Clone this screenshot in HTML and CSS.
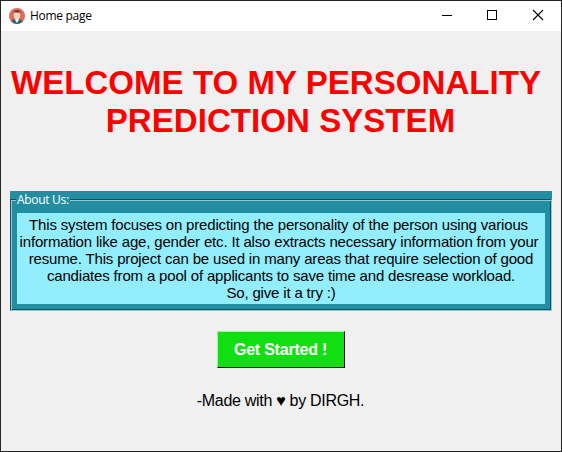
FILE: index.html
```html
<!DOCTYPE html>
<html lang="en">
<head>
<meta charset="utf-8">
<title>Home page</title>
<link rel="stylesheet" href="styles.css">
</head>
<body>
<div class="window">
  <header class="titlebar">
    <svg class="app-icon" viewBox="0 0 16 16" width="16" height="16">
      <circle cx="8" cy="8" r="8" fill="#e36b5b"/>
      <path d="M2.2 13.5Q3.5 11.3 6.3 11h3.4q2.8.3 4.1 2.5A8 8 0 0 1 2.2 13.500Z" fill="#28647b"/>
      <path d="M6.3 10h3.400v2.200L8 15l-1.700-2.800Z" fill="#fff"/>
      <ellipse cx="8" cy="7" rx="3.3" ry="4.2" fill="#f6d5bd"/>
      <path d="M4.5 5.500Q3.800 2.200 8 2q4.200.2 3.500 3.500l-.8-.9Q8 5 5.500 4.300Z" fill="#7b3c2e"/>
    </svg>
    <span class="title">Home page</span>
    <svg class="controls" viewBox="0 0 138 30" width="138" height="30" shape-rendering="crispEdges">
      <path d="M19 14.500h10" stroke="#000" fill="none"/>
      <path d="M64.500 9.500h9v9h-9z" stroke="#000" fill="none"/>
      <path d="M110 9l10 10M120 9l-10 10" stroke="#000" fill="none" stroke-width="1.1" shape-rendering="auto"/>
    </svg>
  </header>
  <main class="content">
    <h1 class="heading"><span class="h1a">WELCOME TO MY PERSONALITY</span><span class="h1b">PREDICTION SYSTEM</span></h1>
    <section class="about">
      <div class="groove">
        <h2 class="legend">About Us:</h2>
        <p class="text">
          <span class="l1">This system focuses on predicting the personality of the person using various</span>
          <span class="l2">information like age, gender etc. It also extracts necessary information from your</span>
          <span class="l3">resume. This project can be used in many areas that require selection of good</span>
          <span class="l4">candiates from a pool of applicants to save time and desrease workload.</span>
          <span class="l5">So, give it a try :)</span>
        </p>
      </div>
    </section>
    <button class="start" type="button">Get Started !</button>
    <footer class="credit">-Made with <span class="heart">♥</span> by DIRGH.</footer>
  </main>
</div>
</body>
</html>
```
FILE: styles.css
```css
* { box-sizing: border-box; }
body { margin: 0; font-family: "Liberation Sans", Arial, sans-serif; color: #000; }
.window { width: 562px; height: 452px; border: 1px solid #252525; background: #f0f0f0; overflow: hidden; }
.titlebar { height: 30px; background: #fff; display: flex; align-items: center; padding-left: 8px; }
.app-icon { flex: none; }
.title { margin-left: 5px; font: 12px/16px "Open Sans", "Segoe UI", sans-serif; letter-spacing: -0.3px; }
.controls { margin-left: auto; }
.content { display: flex; flex-direction: column; align-items: center; padding-top: 33px; }
.heading { margin: 0; display: flex; flex-direction: column; align-items: center; font-size: 33px; line-height: 38px; font-weight: bold; letter-spacing: 0.06px; color: #f00; white-space: nowrap; }
.h1a { margin-right: 10px; }
.h1b { margin-right: 1px; }
.about { width: 542px; height: 120px; margin-top: 51px; padding-top: 8px; background: #238ea1; }
.groove { height: 112px; border: 1px solid #124f60; border-right-color: #91c7d0; border-bottom-color: #91c7d0; padding: 0 5px 4px; box-shadow: inset 1px 1px #91c7d0, inset -1px -1px #124f60; }
.legend { margin: -8px 0 0; width: 54px; height: 16px; padding-left: 1px; background: #238ea1; color: #fff; font: 12px/16px "Open Sans", "Segoe UI", sans-serif; letter-spacing: -0.3px; white-space: nowrap; }
.text { margin: 5px 0 0 1px; width: 528px; height: 91px; padding-top: 3px; background: #92edfc; display: flex; flex-direction: column; align-items: center; font-size: 15px; line-height: 17px; letter-spacing: -0.17px; white-space: nowrap; }
.l1 { margin-right: 5px; }
.l2 { margin-right: 4px; }
.start { margin-top: 20px; width: 128px; height: 37px; padding: 0 1px 0 0; border: 1px solid #000; border-top-color: #a0f4a0; border-left-color: #a0f4a0; background: #12df12; color: #fff; font: bold 16px/20px "Liberation Sans", Arial, sans-serif; letter-spacing: -0.22px; }
.credit { margin: 23px 1px 0 0; font-size: 16px; line-height: 20px; letter-spacing: -0.3px; white-space: nowrap; }
.heart { font-family: "Liberation Sans", sans-serif; }
```
